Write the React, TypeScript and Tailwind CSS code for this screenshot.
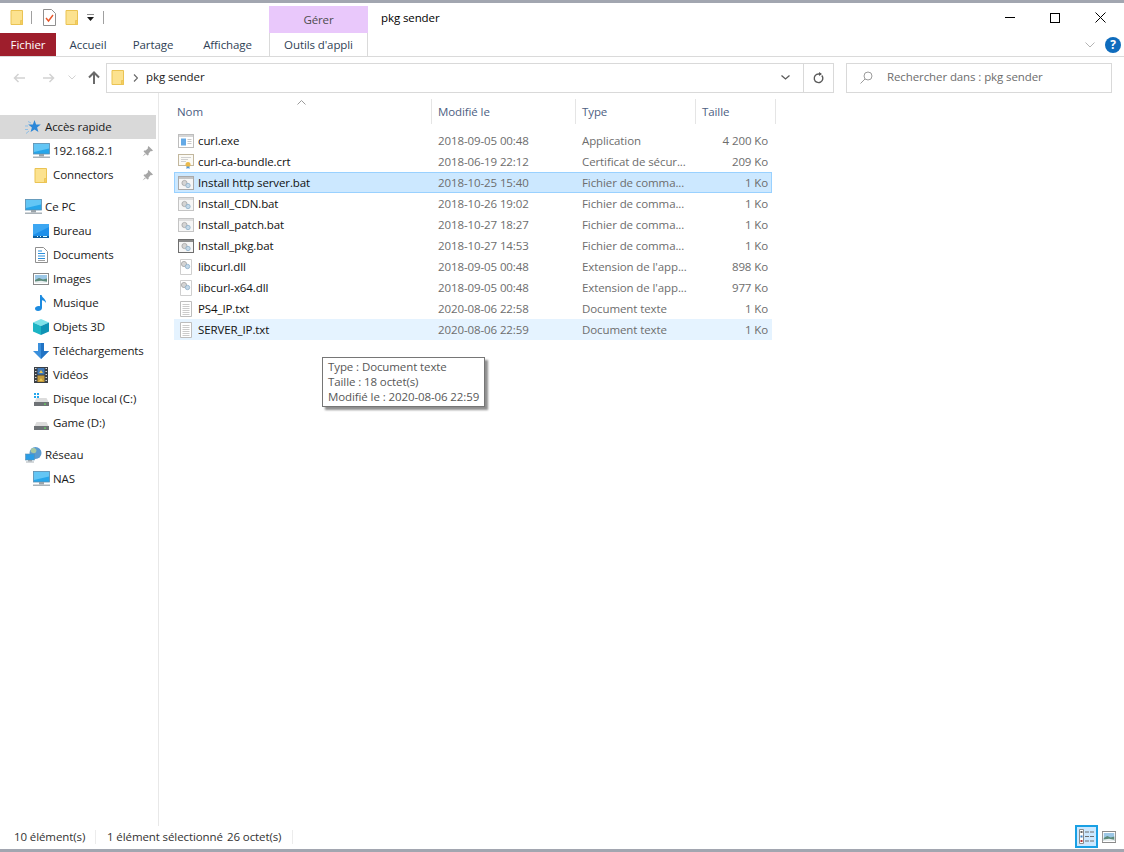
import React from "react";

// Small Explorer-style icons
const FolderIcon = ({ className = "" }: { className?: string }) => (
  <svg className={className} width="14" height="17" viewBox="0 0 14 17">
    <path d="M1 1.5h11.5v14H1z" fill="#fce28f" stroke="#eac353" />
    <path d="M10.5 15.5v-4h2v4z" fill="#f5cf5f" stroke="#eac353" strokeWidth="0.8" />
  </svg>
);

const PcIcon = () => (
  <svg width="17" height="16" viewBox="0 0 17 16">
    <rect x="0.5" y="0.5" width="16" height="10.5" fill="#27a6ea" stroke="#5d8fb0" strokeWidth="0.8" />
    <path d="M1 1h15v4.5L1 9z" fill="#63c6f5" />
    <rect x="6" y="11" width="5" height="2.5" fill="#9aa4aa" />
    <rect x="0" y="13.5" width="17" height="1.5" fill="#a9b2b8" />
  </svg>
);

const StarIcon = () => (
  <svg width="16" height="16" viewBox="0 0 16 16">
    <path d="M9.5 1l1.6 4.4 4.7.2-3.7 2.900 1.300 4.500-3.900-2.600-3.900 2.600 1.300-4.500L3.200 5.600l4.700-.2z" fill="#2b87d8" />
    <path d="M3 2.500l3 1.500M0 7h3M0 10.500h3M1 14.500l3-2.500" stroke="#8fbfe6" strokeWidth="1" />
  </svg>
);

const DesktopIcon = () => (
  <svg width="16" height="14" viewBox="0 0 16 14">
    <rect width="16" height="14" fill="#1e90ea" />
    <path d="M0 0h16v3L0 11z" fill="#3da7f2" />
    <rect y="12" width="16" height="2" fill="#0f5e9e" />
    <path d="M4 12.500h1M7 12.500h1M10 12.500h4" stroke="#dff" strokeWidth="1" />
  </svg>
);

const DocumentsIcon = () => (
  <svg width="13" height="16" viewBox="0 0 13 16">
    <path d="M.5.5h8l4 4v11H.5z" fill="#fff" stroke="#8f8f8f" />
    <path d="M3 4h4M3 6.500h7M3 9h7M3 11.500h7" stroke="#2a8edc" strokeWidth="1.100" />
    <path d="M3 13.500h7" stroke="#a0a0a0" />
  </svg>
);

const PictureIcon = ({ width = 16 }: { width?: number }) => (
  <svg width={width} height="12" viewBox="0 0 16 12" preserveAspectRatio="none">
    <rect x="0.5" y="0.5" width="15" height="11" fill="#fff" stroke="#8a8a8a" />
    <rect x="2" y="2" width="12" height="8" fill="#9cc7e6" />
    <path d="M2 7l4-2 4 1.500 4-1V10H2z" fill="#5c8a7a" />
    <path d="M2 8.500l6-.8 6 1V10H2z" fill="#e8eef0" />
  </svg>
);

const MusicIcon = () => (
  <svg width="13" height="16" viewBox="0 0 13 16">
    <path d="M5 0h1.600c.4 3 4.600 3.800 4.400 8-.8-1.600-2.600-2.600-4-2.800V13c0 1.800-2 3-4 3S0 15 0 13.600C0 12 1.800 11 3.600 11c.6 0 1 .1 1.400.3z" fill="#1c8be0" />
  </svg>
);

const CubeIcon = () => (
  <svg width="16" height="16" viewBox="0 0 16 16">
    <path d="M8 0l8 3.500L8 7 0 3.500z" fill="#7fe3ea" />
    <path d="M0 3.500L8 7v9l-8-3.500z" fill="#1cb4c4" />
    <path d="M16 3.500L8 7v9l8-3.500z" fill="#0f93b5" />
  </svg>
);

const DownloadIcon = () => (
  <svg width="16" height="16" viewBox="0 0 16 16">
    <path d="M5 0h6v8h5l-8 8-8-8h5z" fill="#3a8fdc" />
    <path d="M8 0h3v8h5l-8 8z" fill="#2273c4" />
  </svg>
);

const FilmIcon = () => (
  <svg width="14" height="16" viewBox="0 0 14 16">
    <rect width="14" height="16" fill="#3a3f45" />
    <path d="M1 1.500h1.500M1 4.500h1.500M1 7.500h1.500M1 10.500h1.500M1 13.500h1.500M11.500 1.500H13M11.500 4.500H13M11.500 7.500H13M11.500 10.500H13M11.500 13.500H13" stroke="#d6d6d6" />
    <rect x="3.500" y="1" width="7" height="6.500" fill="#3f78b8" />
    <rect x="3.500" y="8.500" width="7" height="6.500" fill="#c49a3a" />
    <path d="M5 6l2-3 2 3zM5 14l2-3 2 3z" fill="#e8c552" />
  </svg>
);

const DiskIcon = ({ windows = false }: { windows?: boolean }) => (
  <svg width="15" height="13" viewBox="0 0 15 13">
    {windows && <path d="M0 0h2v2H0zM3 0h2v2H3zM0 3h2v2H0zM3 3h2v2H3z" fill="#26a7ec" />}
    <path d="M2.500 5h10l2 4H.5z" fill="#dcdcdc" />
    <rect y="9" width="15" height="4" fill="#6e7276" />
    <rect x="10" y="10.500" width="2" height="1.200" fill="#63d85a" />
  </svg>
);

const NetworkIcon = () => (
  <svg width="17" height="16" viewBox="0 0 17 16">
    <circle cx="10.500" cy="6" r="6" fill="#5b9bd0" />
    <path d="M8 1c3 0 4 2 3 4S7 6 6 5s0-4 2-4z" fill="#a8c8a0" />
    <rect x="0.500" y="7" width="9" height="6" fill="#2b9de6" stroke="#5d8fb0" strokeWidth="0.600" />
    <rect x="3" y="13" width="4" height="1.500" fill="#9aa4aa" />
    <rect x="1" y="14.500" width="8" height="1" fill="#a9b2b8" />
  </svg>
);

const PinIcon = () => (
  <svg width="11" height="11" viewBox="0 0 11 11">
    <path d="M6.500 0L11 4.500 9.800 5.200 8.800 5 6.600 7.400 6.600 9 5.400 9.600 1.600 5.600 2 4.400 3.600 4.400 6 2.200 5.800 1.200z" fill="#a6a6a6" />
    <path d="M3 7.500L.5 10.500 3.800 8.200z" fill="#a6a6a6" />
  </svg>
);

const GearPair = () => (
  <g>
    <circle cx="6.500" cy="7" r="2.600" fill="#d4d4d4" stroke="#a3a3a3" strokeWidth="0.800" />
    <circle cx="10" cy="9.500" r="2.200" fill="#c4d8e8" stroke="#8eaec8" strokeWidth="0.800" />
  </g>
);

const ExeIcon = () => (
  <svg width="16" height="14" viewBox="0 0 16 14">
    <rect x="0.500" y="0.500" width="15" height="13" fill="#fff" stroke="#bdbdbd" />
    <rect x="1" y="1" width="14" height="2" fill="#d6d6d6" />
    <rect x="3" y="4.500" width="5" height="7" fill="#63a9e6" />
    <path d="M9.500 5.500h4M9.500 7.500h4M9.500 9.500h4" stroke="#c8c8c8" />
  </svg>
);

const CrtIcon = () => (
  <svg width="16" height="15" viewBox="0 0 16 15">
    <rect x="0.500" y="0.500" width="15" height="11" fill="#fbfaf5" stroke="#c2b79e" />
    <path d="M3 3.500h10M3 5.500h7M3 7.500h5" stroke="#d0d0d0" />
    <circle cx="10" cy="10.500" r="2.500" fill="#eab94a" />
    <path d="M8.500 12.500v2.500l1.500-1 1.500 1v-2.500z" fill="#4f95d6" />
  </svg>
);

const BatIcon = ({ border = "#c4c4c4", bar = "#dfdfdf" }: { border?: string; bar?: string }) => (
  <svg width="16" height="14" viewBox="0 0 16 14">
    <rect x="0.500" y="0.500" width="15" height="13" fill="#f6f6f6" stroke={border} />
    <rect x="1" y="1" width="14" height="2" fill={bar} />
    <GearPair />
  </svg>
);

const DllIcon = () => (
  <svg width="12" height="16" viewBox="0 0 12 16">
    <path d="M.5.5h11v15H.5z" fill="#fff" stroke="#cfcfcf" />
    <g transform="translate(-2.500 -2)">
      <GearPair />
    </g>
  </svg>
);

const TxtIcon = () => (
  <svg width="12" height="16" viewBox="0 0 12 16">
    <path d="M.5.5h11v15H.5z" fill="#fff" stroke="#bdbdbd" />
    <path d="M2.500 3.500h7M2.500 5.500h7M2.500 7.500h7M2.500 9.500h7M2.500 11.500h7M2.500 13.500h7" stroke="#cbcbcb" />
  </svg>
);

const navGroups = [
  [
    { label: "Accès rapide", icon: <StarIcon />, top: true, active: true },
    { label: "192.168.2.1", icon: <PcIcon />, pin: true },
    { label: "Connectors", icon: <FolderIcon />, pin: true },
  ],
  [
    { label: "Ce PC", icon: <PcIcon />, top: true },
    { label: "Bureau", icon: <DesktopIcon /> },
    { label: "Documents", icon: <DocumentsIcon /> },
    { label: "Images", icon: <PictureIcon /> },
    { label: "Musique", icon: <MusicIcon /> },
    { label: "Objets 3D", icon: <CubeIcon /> },
    { label: "Téléchargements", icon: <DownloadIcon /> },
    { label: "Vidéos", icon: <FilmIcon /> },
    { label: "Disque local (C:)", icon: <DiskIcon windows /> },
    { label: "Game (D:)", icon: <DiskIcon /> },
  ],
  [
    { label: "Réseau", icon: <NetworkIcon />, top: true },
    { label: "NAS", icon: <PcIcon /> },
  ],
];

const files = [
  { name: "curl.exe", date: "2018-09-05 00:48", type: "Application", size: "4 200 Ko", icon: <ExeIcon /> },
  { name: "curl-ca-bundle.crt", date: "2018-06-19 22:12", type: "Certificat de sécur...", size: "209 Ko", icon: <CrtIcon /> },
  { name: "Install http server.bat", date: "2018-10-25 15:40", type: "Fichier de comma...", size: "1 Ko", icon: <BatIcon border="#a9a9a9" bar="#c4c4c4" />, state: "selected" },
  { name: "Install_CDN.bat", date: "2018-10-26 19:02", type: "Fichier de comma...", size: "1 Ko", icon: <BatIcon /> },
  { name: "Install_patch.bat", date: "2018-10-27 18:27", type: "Fichier de comma...", size: "1 Ko", icon: <BatIcon /> },
  { name: "Install_pkg.bat", date: "2018-10-27 14:53", type: "Fichier de comma...", size: "1 Ko", icon: <BatIcon border="#6f6f6f" bar="#8c8c8c" /> },
  { name: "libcurl.dll", date: "2018-09-05 00:48", type: "Extension de l'app...", size: "898 Ko", icon: <DllIcon /> },
  { name: "libcurl-x64.dll", date: "2018-09-05 00:48", type: "Extension de l'app...", size: "977 Ko", icon: <DllIcon /> },
  { name: "PS4_IP.txt", date: "2020-08-06 22:58", type: "Document texte", size: "1 Ko", icon: <TxtIcon /> },
  { name: "SERVER_IP.txt", date: "2020-08-06 22:59", type: "Document texte", size: "1 Ko", icon: <TxtIcon />, state: "hover" },
];

const App = () => {
  return (
    <div className="relative w-[1124px] h-[852px] flex flex-col bg-white overflow-hidden font-['Open_Sans',sans-serif] text-[11.5px] tracking-[-0.1px] text-[#1a1a1a]">
      <div className="h-[3px] bg-[#a2a6b0] shrink-0" />

      {/* Title bar */}
      <div className="h-[30px] shrink-0 flex items-end">
        <div className="h-full flex items-center pl-[10px] pb-[1px] w-[269px]">
          <FolderIcon />
          <div className="w-px h-[13px] bg-[#a0a0a0] ml-[7px]" />
          <svg className="ml-[11px]" width="13" height="17" viewBox="0 0 13 17">
            <path d="M.5.5h8l4 4v12H.5z" fill="#fff" stroke="#8f8f8f" />
            <path d="M3 9l2.500 3L10 6" fill="none" stroke="#e8562a" strokeWidth="1.400" />
          </svg>
          <FolderIcon className="ml-[9px]" />
          <svg className="ml-[7px]" width="9" height="7" viewBox="0 0 9 7">
            <path d="M1 0h7" stroke="#1a1a1a" />
            <path d="M1 3h7L4.500 7z" fill="#1a1a1a" />
          </svg>
          <div className="w-px h-[13px] bg-[#a0a0a0] ml-[8px]" />
        </div>
        <div className="w-[99px] h-[27px] bg-[#e9c8fb] flex items-center justify-center text-[#4d4d4d]">Gérer</div>
        <div className="h-full flex items-center pl-[13px] pb-[1px] text-black">pkg sender</div>
        <div className="ml-auto h-full flex items-center pr-[18px] pb-[1px]">
          <div className="w-[10px] h-px bg-black" />
          <div className="w-[10px] h-[10px] border border-black ml-[35px]" />
          <svg className="ml-[35px]" width="11" height="11" viewBox="0 0 11 11">
            <path d="M.5.5l10 10M10.500.5l-10 10" stroke="#000" />
          </svg>
        </div>
      </div>

      {/* Ribbon tabs */}
      <div className="h-[24px] shrink-0 flex border-b border-[#dadada] text-[#2f3f55]">
        <div className="w-[56px] h-[23px] bg-[#9e1e2c] text-white flex items-center justify-center">Fichier</div>
        <div className="w-[64px] flex items-center justify-center">Accueil</div>
        <div className="w-[66px] flex items-center justify-center">Partage</div>
        <div className="w-[83px] flex items-center justify-center">Affichage</div>
        <div className="w-[99px] flex items-center justify-center border-x border-[#dadada]">Outils d'appli</div>
        <div className="ml-auto flex items-center pr-[3px]">
          <svg width="10" height="6" viewBox="0 0 10 6">
            <path d="M.5.5L5 5 9.500.5" fill="none" stroke="#b4b4b4" />
          </svg>
          <div className="ml-[10px] w-[16px] h-[16px] rounded-full bg-[#0f6cbd] text-white text-[12px] font-bold flex items-center justify-center">?</div>
        </div>
      </div>

      {/* Address bar */}
      <div className="h-[36px] shrink-0 flex items-center pt-[5px] pl-[13px] pr-[12px]">
        <svg width="12" height="10" viewBox="0 0 12 10">
          <path d="M12 5H1.500M5.500 1L1.500 5l4 4" fill="none" stroke="#d2d2d2" strokeWidth="1.500" />
        </svg>
        <svg className="ml-[18px]" width="12" height="10" viewBox="0 0 12 10">
          <path d="M0 5h10.500M6.500 1l4 4-4 4" fill="none" stroke="#d2d2d2" strokeWidth="1.500" />
        </svg>
        <svg className="ml-[13px]" width="8" height="5" viewBox="0 0 8 5">
          <path d="M.5.5L4 4 7.500.5" fill="none" stroke="#d2d2d2" />
        </svg>
        <svg className="ml-[12px]" width="12" height="13" viewBox="0 0 12 13">
          <path d="M6 13V2M1 6.500L6 1.500l5 5" fill="none" stroke="#6a6a6a" strokeWidth="2" />
        </svg>
        <div className="ml-[6px] w-[728px] h-[30px] border border-[#d9d9d9] flex items-center">
          <FolderIcon className="ml-[4px]" />
          <svg className="ml-[8px]" width="5" height="8" viewBox="0 0 5 8">
            <path d="M1 .5L4.500 4 1 7.500" fill="none" stroke="#6a6a6a" strokeWidth="1.200" />
          </svg>
          <span className="ml-[8px] pb-[2px] text-[#1a1a1a]">pkg sender</span>
          <svg className="ml-auto mr-[13px]" width="9" height="5" viewBox="0 0 9 5">
            <path d="M.5.5L4.500 4 8.500.5" fill="none" stroke="#5a5a5a" strokeWidth="1.300" />
          </svg>
          <div className="w-[30px] h-full border-l border-[#d9d9d9] flex items-center justify-center">
            <svg width="11" height="12" viewBox="0 0 11 12">
              <path d="M8.800 3.500A4.300 4.300 0 1 1 5.500 2H8" fill="none" stroke="#5a5a5a" strokeWidth="1.400" />
              <path d="M6 0l3 2-3 2z" fill="#5a5a5a" />
            </svg>
          </div>
        </div>
        <div className="ml-[12px] w-[266px] h-[30px] border border-[#d9d9d9] flex items-center pl-[13px] text-[#6d6d6d]">
          <svg width="13" height="13" viewBox="0 0 13 13">
            <circle cx="8" cy="5" r="4" fill="none" stroke="#9c9c9c" />
            <path d="M5 8l-4.500 4.500" stroke="#9c9c9c" />
          </svg>
          <span className="ml-[14px] pb-[2px]">Rechercher dans : pkg sender</span>
        </div>
      </div>

      {/* Body */}
      <div className="flex-1 flex min-h-0">
        {/* Navigation pane */}
        <div className="w-[159px] shrink-0 border-r border-[#e8e8e8] pt-[22px] pr-[2px] flex flex-col gap-[8px]">
          {navGroups.map((group, i) => (
            <div key={i}>
              {group.map((item: any) => (
                <div
                  key={item.label}
                  className={`h-[24px] flex items-center ${item.active ? "bg-[#d9d9d9]" : ""}`}
                >
                  <div className={`shrink-0 flex items-center justify-center w-[18px] ${item.top ? "ml-[24px]" : "ml-[32px]"}`}>
                    {item.icon}
                  </div>
                  <span className="ml-[3px] whitespace-nowrap">{item.label}</span>
                  {item.pin && (
                    <span className="ml-auto mr-[3px]">
                      <PinIcon />
                    </span>
                  )}
                </div>
              ))}
            </div>
          ))}
        </div>

        {/* File list */}
        <div className="flex-1 min-w-0 pt-[6px] pl-[15px]">
          <div className="relative h-[25px] flex text-[#4d6082] w-[602px]">
            <svg className="absolute left-[123px] top-[1px]" width="9" height="5" viewBox="0 0 9 5">
              <path d="M.5 4.500L4.500.5l4 4" fill="none" stroke="#9a9a9a" />
            </svg>
            <div className="w-[258px] border-r border-[#e5e5e5] flex items-center pl-[3px] pr-px">Nom</div>
            <div className="w-[144px] border-r border-[#e5e5e5] flex items-center pl-[6px]">Modifié le</div>
            <div className="w-[120px] border-r border-[#e5e5e5] flex items-center pl-[6px]">Type</div>
            <div className="w-[80px] border-r border-[#e5e5e5] flex items-center pl-[6px]">Taille</div>
          </div>

          <div className="mt-[6px] w-[598px]">
            {files.map((file) => (
              <div
                key={file.name}
                className={`h-[21px] grid grid-cols-[257px_144px_119px_76px] items-center border ${
                  file.state === "selected"
                    ? "bg-[#cce8ff] border-[#99d1ff]"
                    : file.state === "hover"
                    ? "bg-[#e5f3ff] border-[#e5f3ff]"
                    : "border-transparent"
                }`}
              >
                <div className="flex items-center">
                  <div className="w-[16px] ml-[3px] flex items-center justify-center shrink-0">{file.icon}</div>
                  <span className="ml-[4px] whitespace-nowrap text-[#111]">{file.name}</span>
                </div>
                <div className="pl-[6px] text-[#6d6d6d] whitespace-nowrap">{file.date}</div>
                <div className="pl-[6px] text-[#6d6d6d] whitespace-nowrap">{file.type}</div>
                <div className="pr-[3px] text-right text-[#6d6d6d] whitespace-nowrap">{file.size}</div>
              </div>
            ))}
          </div>
        </div>
      </div>

      {/* Status bar */}
      <div className="h-[23px] shrink-0 flex items-center pl-[14px] pr-[8px] pb-[2px] text-[#333]">
        <span className="w-[81px]">10 élément(s)</span>
        <div className="w-px h-[14px] bg-[#ececec]" />
        <span className="ml-[11px] whitespace-nowrap w-[120px]">1 élément sélectionné</span>
        <span className="whitespace-nowrap w-[65px]">26 octet(s)</span>
        <div className="w-px h-[14px] bg-[#ececec]" />
        <div className="ml-auto w-[23px] h-[23px] shrink-0 border-2 border-[#19a0e4] bg-[#cce8ff] flex items-center justify-center">
          <svg width="15" height="15" viewBox="0 0 15 15">
            <path d="M.5.5h4v14h-4z" fill="#fff" stroke="#8a8a8a" />
            <rect x="1.500" y="2" width="2" height="2" fill="#666" />
            <rect x="1.500" y="6.500" width="2" height="2" fill="#3d7fc2" />
            <rect x="1.500" y="11" width="2" height="2" fill="#b33" />
            <path d="M6 3h4M11 3h4M6 7.500h4M11 7.500h4M6 12h4M11 12h4" stroke="#6f6f6f" />
          </svg>
        </div>
        <div className="ml-[4px] flex">
          <PictureIcon width={14} />
        </div>
      </div>

      <div className="h-[3px] bg-[#a2a6b0] shrink-0" />

      {/* Tooltip */}
      <div className="absolute left-[322px] top-[357px] w-[163px] h-[50px] bg-white border border-[#767676] shadow-[3px_3px_2px_#8f8f8f] pl-[5px] pt-[1px] text-[#575757] leading-[15px]">
        <div>Type : Document texte</div>
        <div>Taille : 18 octet(s)</div>
        <div>Modifié le : 2020-08-06 22:59</div>
      </div>
    </div>
  );
};

export default App;
